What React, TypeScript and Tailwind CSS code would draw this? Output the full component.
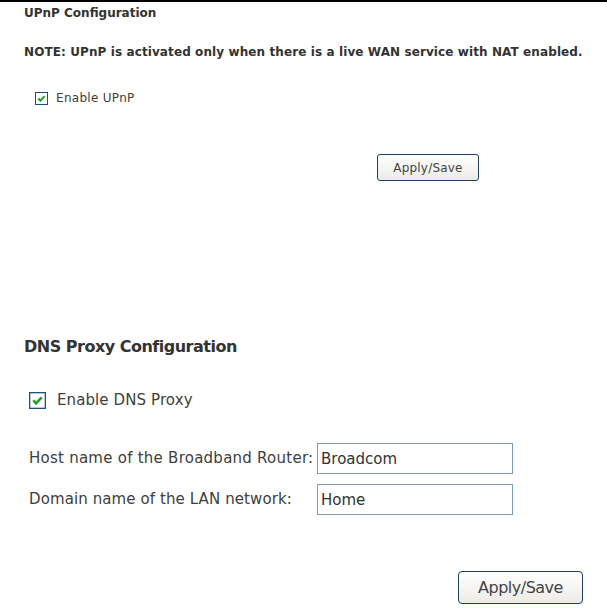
import React from 'react';

function Check({ size }: { size: number }) {
  return (
    <svg width={size} height={size} viewBox="0 0 13 13" className="shrink-0">
      <rect x="0.5" y="0.5" width="12" height="12" fill="#fff" stroke="#1c5180" />
      <path d="M3.3 6.3 L5.4 8.7 L9.7 4.1" fill="none" stroke="#21a121" strokeWidth="2" />
    </svg>
  );
}

export default function App() {
  return (
    <div className="w-[607px] h-[608px] bg-white border-t-2 border-black text-[#404040] font-['DejaVu_Sans',sans-serif] overflow-hidden">
      {/* UPnP */}
      <div className="pl-[24px]">
        <div className="h-[22px] flex items-center text-[12px] font-bold text-[#333]">UPnP Configuration</div>
        <div className="h-[56px] flex items-center text-[12px] font-bold text-[#333] tracking-[0.1px] whitespace-nowrap">
          NOTE: UPnP is activated only when there is a live WAN service with NAT enabled.
        </div>
        <div className="h-[36px] flex items-center gap-[8px] pl-[11px] text-[12px] tracking-[0.3px]">
          <Check size={13} />
          <span>Enable UPnP</span>
        </div>
      </div>
      <div className="mt-[38px] pl-[377px]">
        <button className="w-[102px] h-[27px] rounded-[3px] border border-[#1f3e66] bg-gradient-to-b from-white to-[#ecebe6] text-[12px] text-[#444] tracking-[0.2px]">
          Apply/Save
        </button>
      </div>

      {/* DNS Proxy */}
      <div className="mt-[155px] pl-[24px] h-[22px] flex items-center text-[16px] font-bold text-[#333] tracking-[-0.5px]">
        DNS Proxy Configuration
      </div>
      <div className="mt-[30px] pl-[29px] h-[24px] flex items-center gap-[11px] text-[15px] tracking-[0.1px]">
        <Check size={17} />
        <span>Enable DNS Proxy</span>
      </div>
      <div className="mt-[31px] pl-[29px] grid grid-cols-[288px_196px] gap-y-[10px] text-[15px]">
        <div className="h-[31px] flex items-center tracking-[0.25px] whitespace-nowrap">Host name of the Broadband Router:</div>
        <input readOnly value="Broadcom" className="h-[31px] border border-[#7f9db9] px-[3px] text-[15px] text-[#333] outline-none" />
        <div className="h-[31px] flex items-center tracking-[0.1px] whitespace-nowrap">Domain name of the LAN network:</div>
        <input readOnly value="Home" className="h-[31px] border border-[#7f9db9] px-[3px] text-[15px] text-[#333] outline-none" />
      </div>
      <div className="mt-[56px] pl-[458px]">
        <button className="w-[125px] h-[33px] rounded-[4px] border border-[#1f3e66] bg-gradient-to-b from-white to-[#ecebe6] text-[16px] text-[#444] tracking-[-0.5px]">
          Apply/Save
        </button>
      </div>
    </div>
  );
}
